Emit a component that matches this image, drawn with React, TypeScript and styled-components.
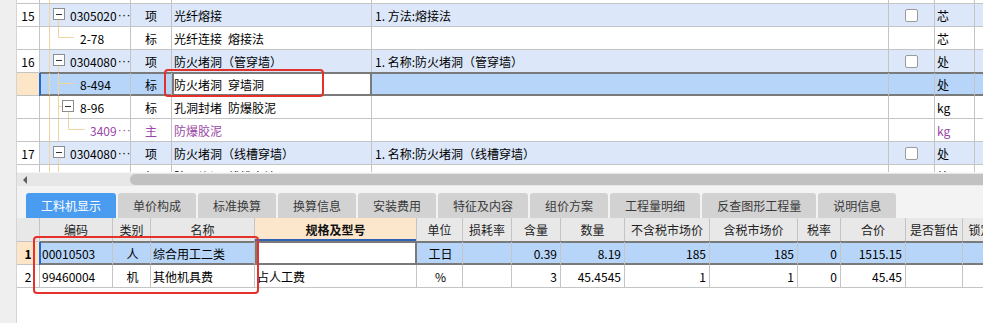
import React from 'react';
import styled, { createGlobalStyle, css } from 'styled-components';

const LINE = '#c4c4c4';
const DARK = '#7a7a7a';
const ITEM_BG = '#dce8fa';
const SEL_BG = '#b6d5f9';
const PEACH = '#fde6c8';
const PURPLE = '#9a46a6';
const MARK = '#1d6ad6';
const TREE = '#f2d3a2';

const GlobalStyle = createGlobalStyle`
  html, body { margin: 0; padding: 0; background: #fff; }
  body {
    font-family: "Noto Sans CJK SC", "Noto Sans", sans-serif;
    font-size: 12px;
    color: #000;
  }
`;

const Screen = styled.div`
  position: relative;
  display: flex;
  width: 983px;
  height: 323px;
  overflow: hidden;
`;

const Gutter = styled.div`
  flex: none;
  width: 16px;
  background: #efefef;
  border-right: 1px solid #d4d4d4;
`;

const Main = styled.div`
  flex: 1;
  min-width: 0;
  display: flex;
  flex-direction: column;
  overflow: hidden;
`;

const TopGrid = styled.div`
  flex: none;
  height: 172px;
  overflow: hidden;
`;

const Row = styled.div<{ $h?: number; $bg?: string }>`
  display: flex;
  flex: none;
  height: ${p => p.$h ?? 23}px;
  background: ${p => p.$bg ?? '#fff'};
  white-space: pre;
`;

type Align = 'left' | 'center' | 'right';

interface CellProps {
  $w: number;
  $align?: Align;
  $bg?: string;
  $color?: string;
  $bold?: boolean;
  $sel?: boolean;
  $edit?: boolean;
  $mark?: boolean;
  $pad?: number;
}

const shadowsFor = (p: CellProps) => {
  const s: string[] = [];
  if (p.$mark) s.push(`-1px 0 0 ${MARK}`, `inset 1px 0 0 ${MARK}`);
  if (p.$edit) s.push(`inset 2px 0 0 ${DARK}`, `inset -1px 0 0 ${DARK}`);
  if (p.$sel) s.push(`0 -1px 0 ${DARK}`, `inset 0 1px 0 ${DARK}`, `inset 0 -1px 0 ${DARK}`);
  return s.length ? s.join(', ') : 'none';
};

const Cell = styled.div<CellProps>`
  flex: none;
  box-sizing: border-box;
  width: ${p => p.$w}px;
  height: 100%;
  display: flex;
  align-items: center;
  justify-content: ${p => (p.$align === 'center' ? 'center' : p.$align === 'right' ? 'flex-end' : 'flex-start')};
  padding: ${p => (p.$pad !== undefined ? `0 ${p.$pad}px` : p.$align === 'right' ? '0 3px 0 0' : '0 0 0 2px')};
  overflow: hidden;
  border-right: 1px solid ${LINE};
  border-bottom: 1px solid ${LINE};
  background: ${p => p.$bg ?? 'transparent'};
  color: ${p => p.$color ?? '#000'};
  font-weight: ${p => (p.$bold ? 700 : 400)};
  box-shadow: ${p => shadowsFor(p)};
  ${p => p.$sel && css`border-bottom-color: ${DARK};`}
  ${p => p.$edit && css`border-right-color: ${DARK};`}
`;

const Dots = styled.span`
  font-family: "Liberation Sans", sans-serif;
  letter-spacing: 0.5px;
  margin-left: 1px;
`;

const TreeSvg = styled.svg`
  flex: none;
  display: block;
`;

const Check = styled.span`
  display: block;
  width: 13px;
  height: 13px;
  box-sizing: border-box;
  border: 1px solid #9b9b9b;
  border-radius: 2px;
  background: #fff;
`;

const Scrollbar = styled.div`
  flex: none;
  height: 14px;
  box-sizing: border-box;
  border-top: 1px solid #f7f7f7;
  background: #e7e7e7;
  display: flex;
  align-items: center;
`;

const ScrollArrow = styled.span`
  width: 0;
  height: 0;
  margin-left: 6px;
  border-right: 4px solid #5f5f5f;
  border-top: 4px solid transparent;
  border-bottom: 4px solid transparent;
`;

const Thumb = styled.span`
  flex: 1;
  height: 11px;
  margin-left: 103px;
  margin-right: -10px;
  border-radius: 6px;
  background: #c1c1c1;
`;

const TabBar = styled.div`
  flex: none;
  height: 32px;
  box-sizing: border-box;
  padding: 7px 0 0 9px;
  background: #f3f3f3;
  display: flex;
  align-items: flex-end;
  gap: 2px;
`;

const Tab = styled.div<{ $active?: boolean }>`
  height: 25px;
  padding: 0 15px;
  display: flex;
  align-items: center;
  border-radius: 3px 3px 0 0;
  font-size: 12px;
  white-space: nowrap;
  background: ${p => (p.$active ? '#4a9cf0' : '#d2d2d2')};
  color: ${p => (p.$active ? '#fff' : '#3a3a3a')};
`;

const BottomGrid = styled.div`
  flex: 1;
  background: #fff;
`;

const HeadCell = styled(Cell)<{ $sort?: boolean }>`
  justify-content: center;
  padding: 0;
  color: #222;
  ${p => p.$sort && css`
    background: #fde7cc;
    font-weight: 700;
    color: #111;
    box-shadow: inset 0 -2px 0 #2f63b6;
  `}
`;

const Annotation = styled.div<{ $x: number; $y: number; $w: number; $h: number }>`
  position: absolute;
  left: ${p => p.$x}px;
  top: ${p => p.$y}px;
  width: ${p => p.$w}px;
  height: ${p => p.$h}px;
  box-sizing: border-box;
  border: 2px solid #e4312b;
  border-radius: 4px;
  pointer-events: none;
`;

type TreeKind = 'stub' | 'parent' | 'child' | 'lastChild' | 'subParent' | 'grandChild';

const TreeLines = ({ kind, h = 22 }: { kind: TreeKind; h?: number }) => {
  const w = kind === 'grandChild' ? 50 : kind === 'parent' || kind === 'stub' ? 30 : 40;
  return (
    <TreeSvg width={w} height={h} viewBox={`0 0 ${w} ${h}`}>
      <line x1={9.5} y1={0} x2={9.5} y2={h} stroke={TREE} />
      {kind === 'parent' && (
        <>
          <line x1={18.5} y1={16} x2={18.5} y2={h} stroke={TREE} />
          <rect x={13.5} y={4.5} width={11} height={11} fill="#fff" stroke="#8d8d8d" />
          <line x1={16} y1={10.5} x2={22} y2={10.5} stroke="#333" />
        </>
      )}
      {kind === 'child' && (
        <>
          <line x1={18.5} y1={0} x2={18.5} y2={h} stroke={TREE} />
          <line x1={18.5} y1={10.5} x2={34} y2={10.5} stroke={TREE} />
        </>
      )}
      {kind === 'lastChild' && (
        <>
          <line x1={18.5} y1={0} x2={18.5} y2={10.5} stroke={TREE} />
          <line x1={18.5} y1={10.5} x2={34} y2={10.5} stroke={TREE} />
        </>
      )}
      {kind === 'subParent' && (
        <>
          <line x1={18.5} y1={0} x2={18.5} y2={h} stroke={TREE} />
          <line x1={18.5} y1={10.5} x2={22} y2={10.5} stroke={TREE} />
          <line x1={28.5} y1={16} x2={28.5} y2={h} stroke={TREE} />
          <rect x={22.5} y={4.5} width={11} height={11} fill="#fff" stroke="#8d8d8d" />
          <line x1={25} y1={10.5} x2={31} y2={10.5} stroke="#333" />
        </>
      )}
      {kind === 'grandChild' && (
        <>
          <line x1={18.5} y1={0} x2={18.5} y2={h} stroke={TREE} />
          <line x1={28.5} y1={0} x2={28.5} y2={10.5} stroke={TREE} />
          <line x1={28.5} y1={10.5} x2={45} y2={10.5} stroke={TREE} />
        </>
      )}
    </TreeSvg>
  );
};

const TOP_W = { num: 23, code: 91, type: 41, name: 200, feat: 517, check: 46, unit: 40, extra: 80 };

interface TopRow {
  num?: string;
  code: string;
  more?: boolean;
  tree: TreeKind;
  type: string;
  name: string;
  feat?: string;
  check?: boolean;
  unit: string;
  item?: boolean;
  sel?: boolean;
  purple?: boolean;
}

// U+2002 is used where the source shows a half-width gap between words
const topRows: TopRow[] = [
  { num: '15', code: '0305020', more: true, tree: 'parent', type: '项', name: '光纤熔接', feat: '1. 方法:熔接法', check: true, unit: '芯', item: true },
  { code: '2-78', tree: 'lastChild', type: '标', name: '光纤连接\u2002熔接法', unit: '芯' },
  { num: '16', code: '0304080', more: true, tree: 'parent', type: '项', name: '防火堵洞（管穿墙）', feat: '1. 名称:防火堵洞（管穿墙）', check: true, unit: '处', item: true },
  { code: '8-494', tree: 'child', type: '标', name: '防火堵洞\u2002穿墙洞', unit: '处', sel: true },
  { code: '8-96', tree: 'subParent', type: '标', name: '孔洞封堵\u2002防爆胶泥', unit: 'kg' },
  { code: '3409', more: true, tree: 'grandChild', type: '主', name: '防爆胶泥', unit: 'kg', purple: true },
  { num: '17', code: '0304080', more: true, tree: 'parent', type: '项', name: '防火堵洞（线槽穿墙）', feat: '1. 名称:防火堵洞（线槽穿墙）', check: true, unit: '处', item: true },
  { code: '8-493', tree: 'child', type: '标', name: '防火堵洞\u2002线槽穿墙', unit: '处' },
];

const tabs = ['工料机显示', '单价构成', '标准换算', '换算信息', '安装费用', '特征及内容', '组价方案', '工程量明细', '反查图形工程量', '说明信息'];

interface Col { key: string; title: string; w: number; align: Align; sort?: boolean }

const cols: Col[] = [
  { key: 'num', title: '', w: 23, align: 'center' },
  { key: 'code', title: '编码', w: 73, align: 'left' },
  { key: 'cat', title: '类别', w: 38, align: 'center' },
  { key: 'name', title: '名称', w: 104, align: 'left' },
  { key: 'spec', title: '规格及型号', w: 162, align: 'left', sort: true },
  { key: 'unit', title: '单位', w: 46, align: 'center' },
  { key: 'loss', title: '损耗率', w: 49, align: 'right' },
  { key: 'qty', title: '含量', w: 49, align: 'right' },
  { key: 'amt', title: '数量', w: 64, align: 'right' },
  { key: 'p1', title: '不含税市场价', w: 85, align: 'right' },
  { key: 'p2', title: '含税市场价', w: 88, align: 'right' },
  { key: 'tax', title: '税率', w: 43, align: 'right' },
  { key: 'total', title: '合价', w: 65, align: 'right' },
  { key: 'est', title: '是否暂估', w: 57, align: 'center' },
  { key: 'lock', title: '锁定数量', w: 60, align: 'center' },
];

const bottomRows: Record<string, string>[] = [
  { num: '1', code: '00010503', cat: '人', name: '综合用工二类', spec: '', unit: '工日', loss: '', qty: '0.39', amt: '8.19', p1: '185', p2: '185', tax: '0', total: '1515.15', est: '', lock: '' },
  { num: '2', code: '99460004', cat: '机', name: '其他机具费', spec: '占人工费', unit: '%', loss: '', qty: '3', amt: '45.4545', p1: '1', p2: '1', tax: '0', total: '45.45', est: '', lock: '' },
];

const TopGridRow = ({ r }: { r: TopRow }) => {
  const color = r.purple ? PURPLE : '#000';
  const bg = r.sel ? SEL_BG : r.item ? ITEM_BG : '#fff';
  return (
    <Row $bg={bg}>
      <Cell $w={TOP_W.num} $align="center" $pad={0} $bg={r.sel ? PEACH : '#fff'}>{r.num}</Cell>
      <Cell $w={TOP_W.code} $pad={0} $color={color} $sel={r.sel} $mark={r.sel}>
        <TreeLines kind={r.tree} />
        {r.code}
        {r.more && <Dots>···</Dots>}
      </Cell>
      <Cell $w={TOP_W.type} $align="center" $pad={0} $color={color} $sel={r.sel}>{r.type}</Cell>
      <Cell $w={TOP_W.name} $color={color} $sel={r.sel} $edit={r.sel} $bg={r.sel ? '#fff' : undefined}>{r.name}</Cell>
      <Cell $w={TOP_W.feat} $pad={3} $sel={r.sel}>{r.feat}</Cell>
      <Cell $w={TOP_W.check} $align="center" $pad={0} $sel={r.sel}>{r.check && <Check />}</Cell>
      <Cell $w={TOP_W.unit} $color={color} $sel={r.sel}>{r.unit}</Cell>
      <Cell $w={TOP_W.extra} $sel={r.sel} />
    </Row>
  );
};

export default function App() {
  return (
    <>
      <GlobalStyle />
      <Screen>
        <Gutter />
        <Main>
          <TopGrid>
            <Row $h={4}>
              <Cell $w={TOP_W.num} />
              <Cell $w={TOP_W.code} $pad={0}><TreeLines kind="stub" h={3} /></Cell>
              <Cell $w={TOP_W.type} />
              <Cell $w={TOP_W.name} />
              <Cell $w={TOP_W.feat} />
              <Cell $w={TOP_W.check} />
              <Cell $w={TOP_W.unit} />
              <Cell $w={TOP_W.extra} />
            </Row>
            {topRows.map((r, i) => <TopGridRow key={i} r={r} />)}
          </TopGrid>

          <Scrollbar>
            <ScrollArrow />
            <Thumb />
          </Scrollbar>

          <TabBar>
            {tabs.map((t, i) => <Tab key={t} $active={i === 0}>{t}</Tab>)}
          </TabBar>

          <BottomGrid>
            <Row $h={24} $bg="#e8e8e8">
              {cols.map(c => <HeadCell key={c.key} $w={c.w} $sort={c.sort}>{c.title}</HeadCell>)}
            </Row>
            {bottomRows.map((r, ri) => {
              const sel = ri === 0;
              return (
                <Row key={ri} $bg={sel ? SEL_BG : '#fff'}>
                  {cols.map(c => {
                    if (c.key === 'num') {
                      return (
                        <Cell key={c.key} $w={c.w} $align="center" $pad={0} $bold={sel} $bg={sel ? PEACH : '#fff'}>
                          {r.num}
                        </Cell>
                      );
                    }
                    const edit = sel && c.key === 'spec';
                    return (
                      <Cell
                        key={c.key}
                        $w={c.w}
                        $align={c.align}
                        $sel={sel}
                        $mark={sel && c.key === 'code'}
                        $edit={edit}
                        $bg={edit ? '#fff' : undefined}
                      >
                        {r[c.key]}
                      </Cell>
                    );
                  })}
                </Row>
              );
            })}
          </BottomGrid>
        </Main>

        <Annotation $x={164} $y={69} $w={160} $h={28} />
        <Annotation $x={33} $y={236} $w={226} $h={58} />
      </Screen>
    </>
  );
}
